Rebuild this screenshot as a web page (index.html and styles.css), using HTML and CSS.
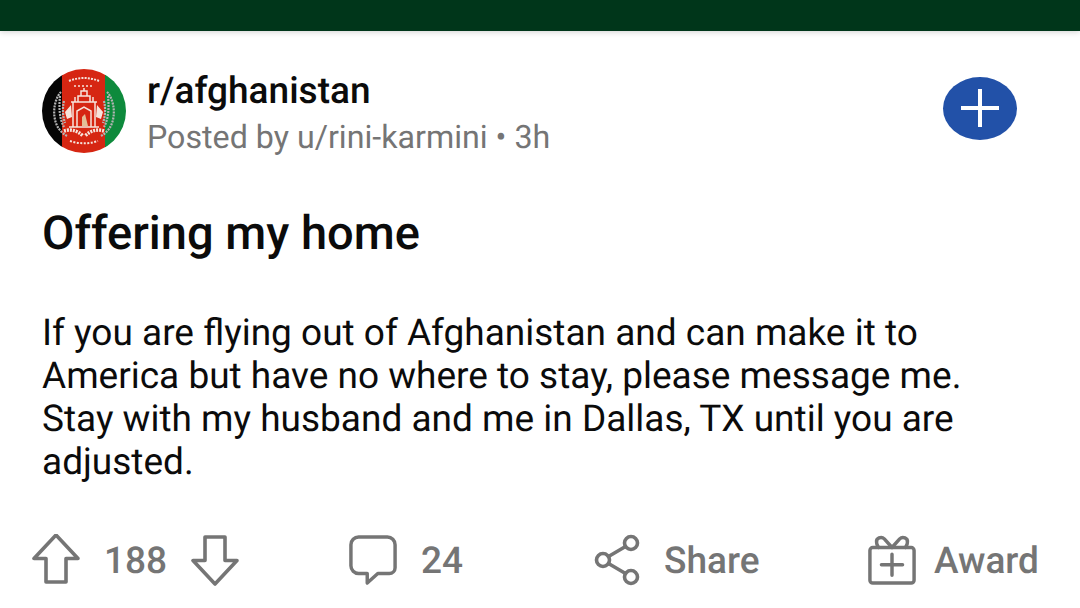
FILE: index.html
```html
<!DOCTYPE html>
<html lang="en">
<head>
<meta charset="utf-8">
<title>Offering my home</title>
<link rel="stylesheet" href="styles.css">
</head>
<body>
<div class="topbar"></div>
<main class="post">
  <header class="head">
    <svg class="avatar" viewBox="0 0 84 84" aria-hidden="true">
      <defs><clipPath id="c"><circle cx="42" cy="42" r="42"/></clipPath></defs>
      <g clip-path="url(#c)">
        <rect width="21" height="84" fill="#050505"/>
        <rect x="20" width="44" height="84" fill="#d62612"/>
        <rect x="63" width="21" height="84" fill="#0e8a3c"/>
        <g fill="none" stroke="#b4b4b4" stroke-width="2.200" stroke-dasharray="2 1">
          <path d="M19 23c-6 6-9 20-5 31 2 6 6 10 11 13"/>
          <path d="M18 27c-1 10-1 22 4 31"/>
          <path d="M22 32c-2 8-1 16 1 22"/>
          <path d="M65 23c6 6 9 20 5 31-2 6-6 10-11 13"/>
          <path d="M66 27c1 10 1 22-4 31"/>
          <path d="M62 32c2 8 1 16-1 22"/>
        </g>
        <g fill="none" stroke="#f6e4dc" stroke-width="1.500">
          <path d="M29 33h26M31 33v25h22V33M27 58h30"/>
          <path d="M35 58V42l7-4 7 4v16"/>
          <path d="M36 33v-6h12v6M39 27v-5h6v5"/>
          <path d="M42 22v-3M33 28v5M51 28v5"/>
          <path d="M27 12c10-4 20-4 30 0" stroke-width="2" stroke-dasharray="2 1.200"/>
          <path d="M32 17h20" stroke-dasharray="2 2"/>
          <path d="M22 62c6-2 13-1 19 5M62 62c-6-2-13-1-19 5" stroke-width="3.500" stroke-dasharray="2 1"/>
          <path d="M28 72c9 3 19 3 28 0" stroke-width="2" stroke-dasharray="2 1.500"/>
        </g>
        <path d="M29 36l-6 7 2 7 5-2zM55 36l6 7-2 7-5-2z" fill="#f6e4dc"/>
        <path d="M40 57v-9l3-3 3 12z" fill="#e3bd96"/>
      </g>
    </svg>
    <div class="meta">
      <div class="sub">r/afghanistan</div>
      <div class="by">Posted by u/rini-karmini • 3h</div>
    </div>
    <button class="join" aria-label="Join">
      <svg viewBox="0 0 38 38" class="plus" aria-hidden="true"><path d="M0 19h38M19 0v38" stroke="#fff" stroke-width="4"/></svg>
    </button>
  </header>
  <h1 class="title">Offering my home</h1>
  <p class="body">If you are flying out of Afghanistan and can make it to<br>America but have no where to stay, please message me.<br>Stay with my husband and me in Dallas, TX until you are<br>adjusted.</p>
  <footer class="actions">
    <div class="group votes">
      <svg class="ico" viewBox="0 0 48 52" aria-hidden="true"><path d="M24 1 2 24.500h12V48h20V24.500h12z"/></svg>
      <span>188</span>
      <svg class="ico" viewBox="0 0 48 52" aria-hidden="true"><path d="M24 50 2 26.500h12V3h20v23.500h12z"/></svg>
    </div>
    <div class="group comments">
      <svg class="ico" viewBox="0 0 50 52" aria-hidden="true"><path d="M10 2h30a8 8 0 0 1 8 8v24a6 6 0 0 1-6 6H30L19 50v-10H10a8 8 0 0 1-8-8V10a8 8 0 0 1 8-8z"/></svg>
      <span>24</span>
    </div>
    <div class="group share">
      <svg class="ico" viewBox="0 0 48 52" aria-hidden="true"><circle cx="37" cy="9" r="6.500"/><circle cx="9" cy="26" r="6.500"/><circle cx="37" cy="43" r="6.500"/><path d="M14.500 22.500 31.500 12.500M14.500 29.500 31.500 39.500"/></svg>
      <span>Share</span>
    </div>
    <div class="group award">
      <svg class="ico" viewBox="0 0 50 52" aria-hidden="true"><rect x="2" y="13" width="46" height="37" rx="3"/><path d="M25 13 17 4c-3-3-9-1-8 4 0 2 1 3 2 5M25 13l8-9c3-3 9-1 8 4 0 2-1 3-2 5M14 31h22M25 20v22"/></svg>
      <span>Award</span>
    </div>
  </footer>
</main>
</body>
</html>
```
FILE: styles.css
```css
* { box-sizing: border-box; }
html, body { margin: 0; padding: 0; }
body {
  width: 1080px;
  height: 608px;
  overflow: hidden;
  background: #fff;
  font-family: Roboto, "Liberation Sans", sans-serif;
  color: #0b0b0b;
  text-rendering: geometricPrecision;
}
.topbar {
  height: 31px;
  background: #00361a;
  box-shadow: 0 1px 6px rgba(0, 0, 0, .18);
}
.post { padding: 38px 40px 0 42px; }
.head { display: flex; align-items: center; height: 84px; }
.avatar { width: 84px; height: 84px; flex: none; }
.meta { margin-left: 21px; flex: 1; padding-top: 8px; }
.sub { font-size: 37px; font-weight: 500; line-height: 44px; }
.by { font-size: 32.200px; line-height: 46px; color: #757575; }
.join {
  width: 74px;
  height: 63px;
  margin: -6px 23px 0 0;
  padding: 0;
  border: 0;
  border-radius: 50%;
  background: #2251a8;
  display: flex;
  align-items: center;
  justify-content: center;
}
.plus { width: 38px; height: 38px; }
.title {
  margin: 48px 0 0;
  font-size: 47px;
  font-weight: 500;
  line-height: 66px;
}
.body {
  margin: 45px 0 0;
  font-size: 37px;
  line-height: 43px;
}
.actions {
  display: flex;
  align-items: center;
  margin: 46px 0 0 -10px;
  height: 60px;
  font-size: 37px;
  font-weight: 500;
  color: #757575;
}
.actions span { padding-top: 2px; }
.group { display: flex; align-items: center; }
.ico {
  width: 48px;
  height: 52px;
  flex: none;
  fill: none;
  stroke: #757575;
  stroke-width: 3.600;
  stroke-linejoin: round;
  stroke-linecap: round;
}
.votes { gap: 24px; width: 317px; }
.comments { gap: 24px; width: 245px; }
.share { gap: 22px; width: 274px; }
.award { gap: 18px; }
```
